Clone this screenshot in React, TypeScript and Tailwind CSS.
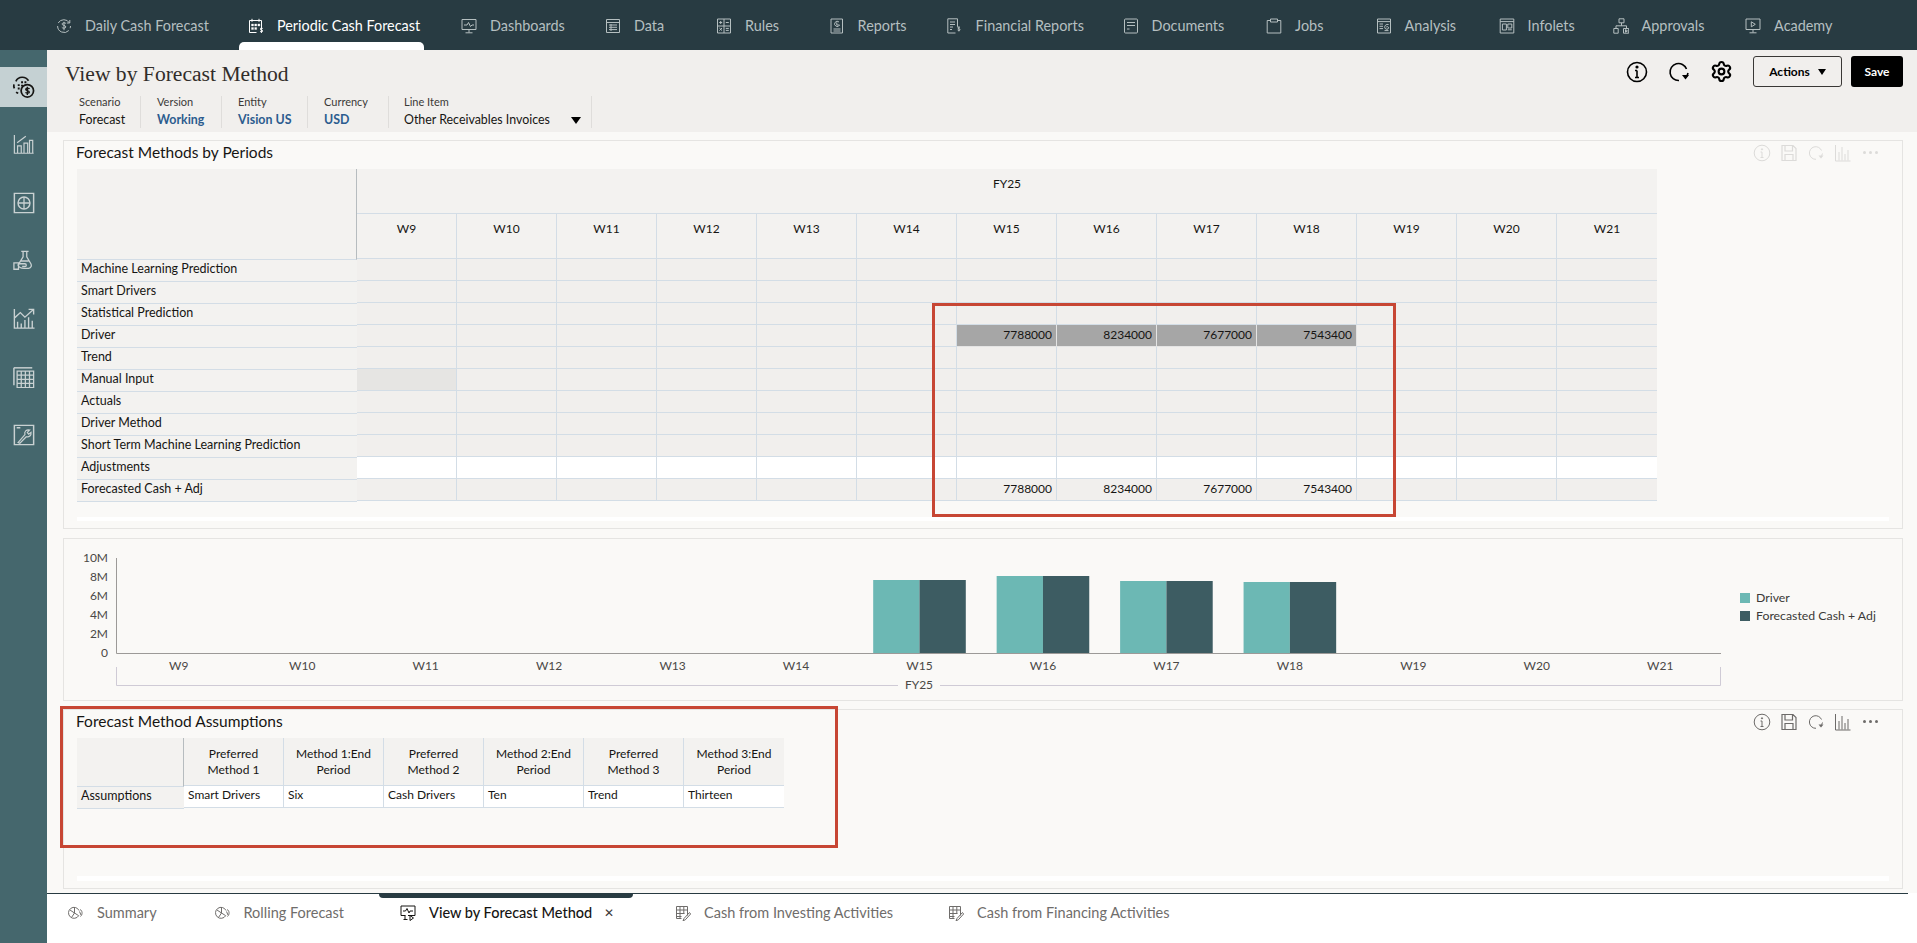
import { ReactNode } from "react";
import { Settings } from "lucide-react";

function Ico({ size = 16, view = 16, sw = 1, children }: { size?: number; view?: number; sw?: number; children: ReactNode }) {
  return (
    <svg width={size} height={size} viewBox={`0 0 ${view} ${view}`} fill="none" stroke="currentColor" strokeWidth={sw} className="shrink-0">
      {children}
    </svg>
  );
}

const dollar = "M10 5.6c-.5-1-3.6-1.2-4 .3-.4 1.6 4 1.2 3.9 3.1-.2 1.6-3.5 1.5-4.1.3M8 3.8v8.4";

const navItems = [
  { label: "Daily Cash Forecast", w: "w-[192px]", icon: <><path d="M13.5 5A6.5 6.5 0 0 0 2.2 5M1.6 8a6.5 6.5 0 0 0 11.2 4.5M14.5 8a6.5 6.5 0 0 1-.4 2.2M13.8 2v3h-3" /><path d={dollar} /></> },
  { label: "Periodic Cash Forecast", w: "w-[213px]", active: true, icon: <><path d="M1.5 2.5h12v8M1.5 2.5v12h7M4 .8v3M11 .8v3" /><path d="M3.5 6h2v2h-2zM6.7 6h2v2h-2zM9.9 6h2v2h-2zM3.5 9.5h2v2h-2zM6.7 9.5h2v2h-2z" fill="currentColor" strokeWidth=".3" /><path d="M14.8 10.6c-.6-.7-2.5-.7-2.6.4-.1 1.1 2.7.9 2.6 2-.1 1-2.2 1-2.8.2M13.4 9.6v5.4" /></> },
  { label: "Dashboards", w: "w-[144px]", icon: <><path d="M1 1.5h14v10H1zM8 11.5v3M4.5 14.8h7" /><path d="M3 7h3l1.5-2.5L9.5 8.5 11 7h2" /></> },
  { label: "Data", w: "w-[111px]", icon: <><path d="M1.5 1.5h13v13h-13zM1.5 4.5h13M4 7h8M4 9.3h8M4 11.6h8M6 6v7" /></> },
  { label: "Rules", w: "w-[112.6px]", icon: <><path d="M1.5 1h13v14h-13zM8 1v14M1.5 8h13" /><path d="M3.2 4.5h3M4.7 3v3M9.8 4.5h3M3.4 10l2.6 2.6M6 10l-2.6 2.6M9.8 10.4h3M9.8 12.4h3" /></> },
  { label: "Reports", w: "w-[118px]", icon: <><path d="M2 1h11.5v14H2zM4.5 11h7M4.5 13h7" /><path d="M10 4a2.6 2.6 0 1 0 .6 3H7.8V4.4" /></> },
  { label: "Financial Reports", w: "w-[176px]", icon: <><path d="M8.5 15H.8V.8h9.7v8M3 4h5M3 6.5h5M3 9h3M3 11.5h2" /><path d="M13 9.5c-.5-.6-2.2-.6-2.3.4-.1 1 2.5.8 2.4 1.9-.1.9-2 .9-2.5.2M11.9 8.6v4.8" /></> },
  { label: "Documents", w: "w-[143.5px]", icon: <><rect x="1.5" y="1" width="13" height="14" rx="1" /><path d="M4 4.5h8M4 7.5h8M4 11h2.5" /></> },
  { label: "Jobs", w: "w-[109.5px]", icon: <><path d="M4.5 2.5H1.2V15h13.6V2.5h-3.3" /><path d="M4.5 1h7v3h-7z" /></> },
  { label: "Analysis", w: "w-[123px]", icon: <><path d="M1.5 1h13v14h-13zM1.5 3.6h13M3.5 6h3.5M3.5 8.3h3.5M3.5 10.6h3.5" /><path d="M12.6 6.5c-2.5-.8-4.4 1.4-3.8 3.4.7 2 3.6 1.7 3.8 0 .1-1.2-1.6-1.8-2.4-.8M8.5 12.6h4" /></> },
  { label: "Infolets", w: "w-[114px]", icon: <><path d="M1.2 1h13.6v14H1.2zM1.2 3.6h13.6" /><path d="M3.4 6h4v6h-4zM8.8 6h4v4h-4zM8.8 11.8h4" /></> },
  { label: "Approvals", w: "w-[132.5px]", icon: <><path d="M6 .8h5v4H6zM.8 10.5h4.4v4.7H.8zM10.5 10.5h5.2v4.7h-5.2zM8.5 4.8v3M3 10.5V7.8h10.5v2.7" /><path d="M12.5 11.6v2.6l2-1.3z" /></> },
  { label: "Academy", w: "w-[140px]", icon: <><path d="M1 1h14v10.5H1zM8 11.5v3M4.5 14.8h7" /><path d="M6.3 3.8v5l4-2.5z" /></> },
];

const sideIcons = [
  <><path d="M4 5.5a7.5 7.5 0 0 1 13.2-.5M2.5 13c-.5-1-.8-2.6-.5-4.2M6.5 18c-.8-.3-1.6-.7-2.2-1.2" strokeWidth="1.8" /><path d="M6 8.5h2v2H6zM9.5 5.5h2v2h-2zM13 5.5h2v2h-2zM9.5 9h2v2h-2zM6 12h2v2H6z" fill="currentColor" strokeWidth="0" /><circle cx="16" cy="15.5" r="6.5" strokeWidth="1.8" /><path d="M18.3 13.4c-.7-.8-3.8-1-4 .6-.2 1.6 3.9 1.1 3.8 2.9-.2 1.4-3.2 1.3-4 .2M16 11.2v8.6" strokeWidth="1.4" /></>,
  <><path d="M1.5 1v20h21M5 21v-8h4v8M12 21V10h4v11M18 21V7h3.5v14M4.5 9.5 14 2.5" strokeWidth="1.3" /></>,
  <><path d="M1.5 1.5h21v21h-21z" strokeWidth="1.6" /><circle cx="12" cy="12" r="6.5" strokeWidth="1.6" /><path d="M5.5 12h13M12 5.5v13" strokeWidth="1.4" /></>,
  <><path d="M9 1.5h8M11 1.5v6L5.5 16.5c.8 2.5 3 3.5 6.5 3.5h5c3-.5 3.5-3 2.5-5L15 7.5v-6M8 12h9" strokeWidth="1.4" /><path d="M1 14h5v7H1zM6 15h7c2 0 2 3 0 3h-3" strokeWidth="1.4" /></>,
  <><path d="M1.5 1v21h22M5 22v-7M9 22v-5M13 22V13M17 22V10M21 22v-8" strokeWidth="1.5" /><path d="M2 10.5 8 5l5 5L22 2M17 1.5h5.5V7" strokeWidth="1.5" /></>,
  <><path d="M1 2v19" strokeWidth="1.6" /><path d="M1 2h20" strokeWidth="1.6" /><path d="M4.5 5.5h18v18h-18zM4.5 10h18M4.5 14.5h18M4.5 19h18M9 5.5v18M13.5 5.5v18M18 5.5v18" strokeWidth="1.4" /></>,
  <><path d="M1.5 1.5h21v21h-21zM4 4h4" strokeWidth="1.6" /><path d="M5.5 20.2 13 11.5c-1-3.2 1.6-5.8 5.2-5l-2.6 2.7 1.5 2 2.6-2c.5 3.2-2.3 5.5-5.2 4.7L7.5 21z" strokeWidth="1.3" /></>,
];

function PanelIcons({ faded }: { faded?: boolean }) {
  return (
    <div className={`flex items-center gap-[9px] mr-[23px] ${faded ? "text-[#dcdbd9]" : "text-[#6d6b69]"}`}>
      <Ico size={18} view={18}>
        <circle cx="9" cy="9" r="7.8" />
        <path d="M9 8v5.5M7.5 8H9M7.5 13.5h3" />
        <circle cx="9" cy="5.3" r=".6" fill="currentColor" />
      </Ico>
      <Ico size={18} view={18}>
        <path d="M2 1.5h11l3 3v12H2zM5 1.5v5.5h7.5V1.5M5 16.5v-6h8v6" strokeWidth="1.2" />
      </Ico>
      <Ico size={18} view={18}>
        <path d="M14.5 6.5A6.3 6.3 0 1 0 9 15.3M15.5 9.5a6 6 0 0 1-2.3 3.6" />
        <path d="M11.5 11.5h5l-2.5 3z" fill="currentColor" strokeWidth="0" />
      </Ico>
      <Ico size={18} view={18}>
        <path d="M1.5 1v16h15M5 16.5V8M8 16.5V3M11 16.5V10M14 16.5V6" />
      </Ico>
      <div className="flex gap-[3px] w-[18px] justify-center">
        <span className="w-[3px] h-[3px] rounded-full bg-current" />
        <span className="w-[3px] h-[3px] rounded-full bg-current" />
        <span className="w-[3px] h-[3px] rounded-full bg-current" />
      </div>
    </div>
  );
}

const weeks = ["W9", "W10", "W11", "W12", "W13", "W14", "W15", "W16", "W17", "W18", "W19", "W20", "W21"];
const values: Record<string, string> = { W15: "7788000", W16: "8234000", W17: "7677000", W18: "7543400" };
const rows = [
  "Machine Learning Prediction",
  "Smart Drivers",
  "Statistical Prediction",
  "Driver",
  "Trend",
  "Manual Input",
  "Actuals",
  "Driver Method",
  "Short Term Machine Learning Prediction",
  "Adjustments",
  "Forecasted Cash + Adj",
];

function cellColor(row: string, week: string) {
  if (row === "Adjustments") return "bg-white";
  if (row === "Manual Input" && week === "W9") return "bg-[#e6e5e3]";
  if (row === "Driver" && values[week]) return "bg-[#a6a6a6] border-[#e4e4e4]";
  return "bg-[#f1efed]";
}

function PeriodGrid() {
  return (
    <div className="flex text-xs text-[#161513]">
      <div className="w-[280px] shrink-0">
        <div className="h-[91px] bg-[#f3f2f0] border-b border-r border-b-[#d3dde6] border-r-[#b6bcbf]" />
        {rows.map((r) => (
          <div key={r} className="h-[22px] flex items-center pl-[4px] pb-[3px] text-[12.5px] bg-[#f3f2f0] border-b border-[#d3dde6]">
            {r}
          </div>
        ))}
      </div>
      <div className="w-[1300px]">
        <div className="h-[45px] bg-[#f3f2f0] border-b border-[#d3dde6] text-center pt-[7px] leading-4">FY25</div>
        <div className="flex">
          {weeks.map((w) => (
            <div key={w} className="w-[100px] h-[45px] bg-[#f3f2f0] border-b border-r last:border-r-0 border-[#d3dde6] text-center pt-[7px] leading-4">
              {w}
            </div>
          ))}
        </div>
        {rows.map((r) => (
          <div key={r} className="flex">
            {weeks.map((w) => (
              <div key={w} className={`w-[100px] h-[22px] border-b border-r last:border-r-0 border-[#d3dde6] flex items-center justify-end pr-[4px] pb-[1px] ${cellColor(r, w)}`}>
                {(r === "Driver" || r === "Forecasted Cash + Adj") && values[w]}
              </div>
            ))}
          </div>
        ))}
      </div>
    </div>
  );
}

const assumptions = [
  ["Preferred Method 1", "Smart Drivers"],
  ["Method 1:End Period", "Six"],
  ["Preferred Method 2", "Cash Drivers"],
  ["Method 2:End Period", "Ten"],
  ["Preferred Method 3", "Trend"],
  ["Method 3:End Period", "Thirteen"],
];

function AssumptionGrid() {
  return (
    <div className="flex text-xs text-[#161513]">
      <div className="w-[107px] shrink-0">
        <div className="h-[49px] bg-[#f3f2f0] border-b border-r border-b-[#d3dde6] border-r-[#b6bcbf]" />
        <div className="h-[22px] flex items-center pl-[4px] pb-[2px] text-[12.5px] bg-[#f3f2f0] border-b border-[#d3dde6]">Assumptions</div>
      </div>
      <div className="flex">
        {assumptions.map(([head, val], i) => (
          <div key={head} className="w-[100px]">
            <div className={`h-[48px] bg-[#f3f2f0] border-b border-[#d3dde6] flex items-center justify-center text-center leading-4 px-[8px] ${i < 5 ? "border-r" : ""}`}>
              {head}
            </div>
            <div className={`h-[22px] bg-white border-b border-[#d3dde6] flex items-center pl-[4px] pb-[3px] ${i < 5 ? "border-r" : ""}`}>{val}</div>
          </div>
        ))}
      </div>
    </div>
  );
}

const ticks = ["10M", "8M", "6M", "4M", "2M", "0"];
const bars = [
  { i: 6, top: 580 },
  { i: 7, top: 576 },
  { i: 8, top: 581 },
  { i: 9, top: 582 },
];

// chart coordinates are page coordinates, shifted by the panel's inner corner (64, 539)
function Chart() {
  return (
    <svg width="1666" height="161" viewBox="64 539 1666 161" className="shrink-0 block" fontSize="12" fill="#4a4846">
      {ticks.map((t, i) => (
        <text key={t} x="108" y={562 + i * 19} textAnchor="end">
          {t}
        </text>
      ))}
      {bars.map((b) => {
        const cx = 117 + (b.i + 0.5) * 123.46;
        return (
          <g key={b.i}>
            <rect x={cx - 46.3} y={b.top} width="46.3" height={653 - b.top} fill="#6cb8b4" />
            <rect x={cx} y={b.top} width="46.3" height={653 - b.top} fill="#3d5c62" />
          </g>
        );
      })}
      <path d="M116.5 558v95.5h1604.5" fill="none" stroke="#9c9a98" />
      {weeks.map((w, i) => (
        <text key={w} x={117 + (i + 0.5) * 123.46} y="670" textAnchor="middle">
          {w}
        </text>
      ))}
      <path d="M116.5 667v18.5h1604v-18.5" fill="none" stroke="#cfcbd6" />
      <rect x="898" y="678" width="42" height="14" fill="#faf9f7" />
      <text x="919" y="689" textAnchor="middle">
        FY25
      </text>
    </svg>
  );
}

const bottomTabs = [
  { label: "Summary", w: "w-[146.5px]", icon: "pie" },
  { label: "Rolling Forecast", w: "w-[185.5px]", icon: "pie" },
  { label: "View by Forecast Method", w: "w-[275px]", icon: "view", active: true },
  { label: "Cash from Investing Activities", w: "w-[273px]", icon: "cash" },
  { label: "Cash from Financing Activities", w: "w-[260px]", icon: "cash" },
];

function BottomIcon({ kind }: { kind: string }) {
  if (kind === "pie")
    return (
      <Ico>
        <path d="M11 5.5a5.5 5.5 0 1 0-.3 5.2L6.5 8V2.5" />
        <path d="M2 5l4.5 3L3.5 12.5" />
        <path d="M12 4.5c2.5 1 2.8 5 .5 7M11.5 6.5l1.5 3.5" />
      </Ico>
    );
  if (kind === "view")
    return (
      <Ico>
        <path d="M1 1h14v9.5H8M5.5 10.5H1V1M3.5 14.5h4M5 10.5v4" />
        <path d="M3 6h2.5L7 3.5l2 4.5 1-2h3M10 10.5v5l3.5-2.5z" />
      </Ico>
    );
  return (
    <Ico>
      <path d="M1.5 1.5h11v9M1.5 1.5v12h5M1.5 5h11M1.5 8.5h8M1.5 11.5h5M5 1.5v12M8.8 1.5v7" />
      <path d="M14.5 7.5 9 13.5l-1 2.3 2.3-1L15.6 9z" />
    </Ico>
  );
}

export default function App() {
  return (
    <div className="relative w-[1917px] h-[943px] overflow-hidden flex flex-col bg-white font-['Lato',sans-serif] text-[#161513]">
      <nav className="h-[50px] shrink-0 bg-[#283b42] flex pl-[56px] pt-[2px] text-[14.4px]">
        {navItems.map((n) => (
          <div key={n.label} className={`relative h-full flex items-center shrink-0 gap-[13px] ${n.w} ${n.active ? "text-white" : "text-[#b5bfc0]"}`}>
            <Ico>{n.icon}</Ico>
            <span>{n.label}</span>
            {n.active && <div className="absolute -left-[9px] bottom-0 w-[185px] h-[8px] bg-white rounded-t-[5px]" />}
          </div>
        ))}
      </nav>

      <div className="flex-1 flex min-h-0">
        <aside className="w-[47px] shrink-0 bg-[#45676d] pt-[17px] text-[#c9d1d2] flex flex-col items-stretch">
          <div className="h-[40px] mb-[9px] bg-[#c5d1d3] text-[#161513] flex items-center justify-center">
            <Ico size={23} view={24}>{sideIcons[0]}</Ico>
          </div>
          {sideIcons.slice(1).map((ic, i) => (
            <div key={i} className="h-[58px] flex items-center justify-center">
              <Ico size={22} view={24}>{ic}</Ico>
            </div>
          ))}
        </aside>

        <main className="flex-1 flex flex-col min-w-0">
          <header className="h-[82px] shrink-0 bg-[#f1efed] pl-[18px]">
            <div className="h-[46px] flex justify-between pt-[6px] pr-[14px]">
              <h1 className="mt-[6px] text-[21.6px] leading-6 text-[#312d2a] font-['Liberation_Serif',serif]">View by Forecast Method</h1>
              <div className="flex items-center h-[31px] text-black">
                <Ico size={22} view={22} sw={1.6}>
                  <circle cx="11" cy="11" r="9.5" />
                  <path d="M11 9.5v7M9 9.5h2M9 16.5h4" />
                  <circle cx="11" cy="6" r=".8" fill="currentColor" />
                </Ico>
                <div className="ml-[20px]">
                  <Ico size={22} view={22} sw={1.6}>
                    <path d="M18.5 8A8.5 8.5 0 1 0 11 19.5M20 12a8 8 0 0 1-2 4" />
                    <path d="M14 14h7l-3.5 4.5z" fill="currentColor" strokeWidth="0" />
                  </Ico>
                </div>
                <Settings size={23} strokeWidth={2.2} className="ml-[20px]" />
                <button className="ml-[20px] w-[89px] h-[31px] rounded-[3px] border border-[#3a3836] bg-[#f1efed] flex items-center justify-center gap-[8px] text-xs font-bold">
                  Actions
                  <span className="w-0 h-0 border-x-[4.5px] border-x-transparent border-t-[6px] border-t-black" />
                </button>
                <button className="ml-[9px] w-[52px] h-[31px] rounded-[3px] bg-black text-white text-xs font-bold">Save</button>
              </div>
            </div>
            <div className="flex h-[32px]">
              {[
                { label: "Scenario", value: "Forecast", w: "w-[76px] pl-[14px]" },
                { label: "Version", value: "Working", w: "w-[81px] pl-[16px]", blue: true },
                { label: "Entity", value: "Vision US", w: "w-[86px] pl-[16px]", blue: true },
                { label: "Currency", value: "USD", w: "w-[81px] pl-[16px]", blue: true },
              ].map((f) => (
                <div key={f.label} className={`${f.w} border-r border-[#dfdddb]`}>
                  <div className="text-[11px] leading-[12px] text-[#3b3937]">{f.label}</div>
                  <div className={`mt-[4px] text-[12.4px] leading-[16px] ${f.blue ? "font-bold text-[#2c5c8f]" : ""}`}>{f.value}</div>
                </div>
              ))}
              <div className="w-[203px] pl-[15px] border-r border-[#dfdddb]">
                <div className="text-[11px] leading-[12px] text-[#3b3937]">Line Item</div>
                <div className="mt-[4px] text-[12.4px] leading-[16px] flex items-center justify-between pr-[10px]">
                  Other Receivables Invoices
                  <span className="w-0 h-0 border-x-[5px] border-x-transparent border-t-[7px] border-t-black" />
                </div>
              </div>
            </div>
          </header>

          <section className="flex-1 min-h-0 bg-[#faf9f7] pt-[8px] pl-[16px] pr-[14px] flex flex-col">
            <div className="h-[389px] shrink-0 border border-[#e5e4e2] flex flex-col pl-[13px]">
              <div className="h-[25px] mb-[3px] pb-[2px] flex items-center justify-between">
                <h2 className="-ml-px text-[15.5px] text-[#161513]">Forecast Methods by Periods</h2>
                <PanelIcons faded />
              </div>
              <PeriodGrid />
              <div className="mt-auto mb-[7px] mr-[13px] h-[4px] bg-white" />
            </div>

            <div className="mt-[9px] h-[163px] shrink-0 border border-[#e5e4e2] flex">
              <Chart />
              <div className="pl-[10px] pt-[50px] text-[12.3px] text-[#3b3937]">
                <div className="h-[18px] flex items-center gap-[6px]">
                  <span className="w-[10px] h-[10px] bg-[#6cb8b4]" />
                  Driver
                </div>
                <div className="h-[18px] flex items-center gap-[6px]">
                  <span className="w-[10px] h-[10px] bg-[#3d5c62]" />
                  Forecasted Cash + Adj
                </div>
              </div>
            </div>

            <div className="mt-[8px] h-[180px] shrink-0 border border-[#e5e4e2] flex flex-col pl-[13px]">
              <div className="h-[25px] mb-[3px] pb-[2px] flex items-center justify-between">
                <h2 className="-ml-px text-[15.5px] text-[#161513]">Forecast Method Assumptions</h2>
                <PanelIcons />
              </div>
              <AssumptionGrid />
              <div className="mt-auto mb-[7px] mr-[13px] h-[5px] bg-white" />
            </div>
          </section>

          <div className="h-[50px] shrink-0 mr-[9px] border-t border-[#283b42] bg-white flex pl-[21px] text-[14.5px]">
            {bottomTabs.map((t) => (
              <div key={t.label} className={`relative shrink-0 pb-[11px] flex items-center gap-[13px] whitespace-nowrap ${t.w} ${t.active ? "text-[#161513] font-medium" : "text-[#6f6d6b]"}`}>
                <span className={t.active ? "text-[#161513]" : "text-[#6f6d6b]"}>
                  <BottomIcon kind={t.icon} />
                </span>
                <span>{t.label}</span>
                {t.active && (
                  <>
                    <span className="text-[#3b3937] -ml-px text-xs">✕</span>
                    <div className="absolute -left-[21px] top-0 w-[254px] h-[4px] bg-[#283b42] rounded-b-[4px]" />
                  </>
                )}
              </div>
            ))}
          </div>
        </main>
      </div>

      <div className="absolute left-[932px] top-[303px] w-[464px] h-[214px] border-[3px] border-[#c74634] pointer-events-none" />
      <div className="absolute left-[60px] top-[706px] w-[778px] h-[142px] border-[3px] border-[#c74634] pointer-events-none" />
    </div>
  );
}
